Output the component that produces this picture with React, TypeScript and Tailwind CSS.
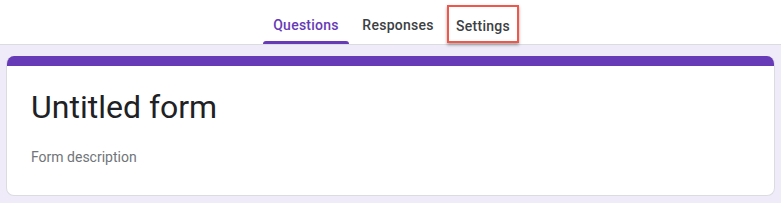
export default function App() {
  return (
    <div className="w-[781px] h-[203px] bg-[#f0ebf8] overflow-hidden" style={{ fontFamily: "Roboto, 'Liberation Sans', sans-serif" }}>
      {/* ---------- Tabs ---------- */}
      <div className="h-[45px] bg-white border-b border-[#dadce0] flex justify-center items-end">
        <div className="flex items-end gap-[4px] pl-[1px]">
          <div className="relative w-[86px] h-[44px] flex items-center justify-center pt-[6px] text-[14px] font-medium text-[#673ab7] tracking-[0.25px]">
            Questions
            <span className="absolute left-0 right-0 bottom-0 h-[3px] rounded-t-[3px] bg-[#673ab7]" />
          </div>
          <div className="w-[90px] h-[44px] flex items-center justify-center pt-[6px] text-[14px] font-medium text-[#3c4043] tracking-[0.25px]">
            Responses
          </div>
          <div className="w-[72px] h-[44px] flex items-start justify-center">
            <div className="mt-[5px] w-[72px] h-[38px] border-2 border-[#f0564a] shadow-[0_2px_3px_rgba(0,0,0,0.35)] flex items-center justify-center pt-[4px] text-[14px] font-medium text-[#3c4043] tracking-[0.25px]">
              Settings
            </div>
          </div>
        </div>
      </div>

      {/* ---------- Form header card ---------- */}
      <div className="mx-[6px] mt-[11px] h-[140px] rounded-[8px] overflow-hidden bg-white border border-[#dadce0] border-t-0">
        <div className="h-[10px] bg-[#673ab7]" />
        <div className="pl-[24px] pt-[21px]">
          <h1 className="text-[32px] leading-[40px] text-[#202124]">Untitled form</h1>
          <p className="mt-[20px] text-[14px] leading-[20px] text-[#70757a]">Form description</p>
        </div>
      </div>
    </div>
  );
}
